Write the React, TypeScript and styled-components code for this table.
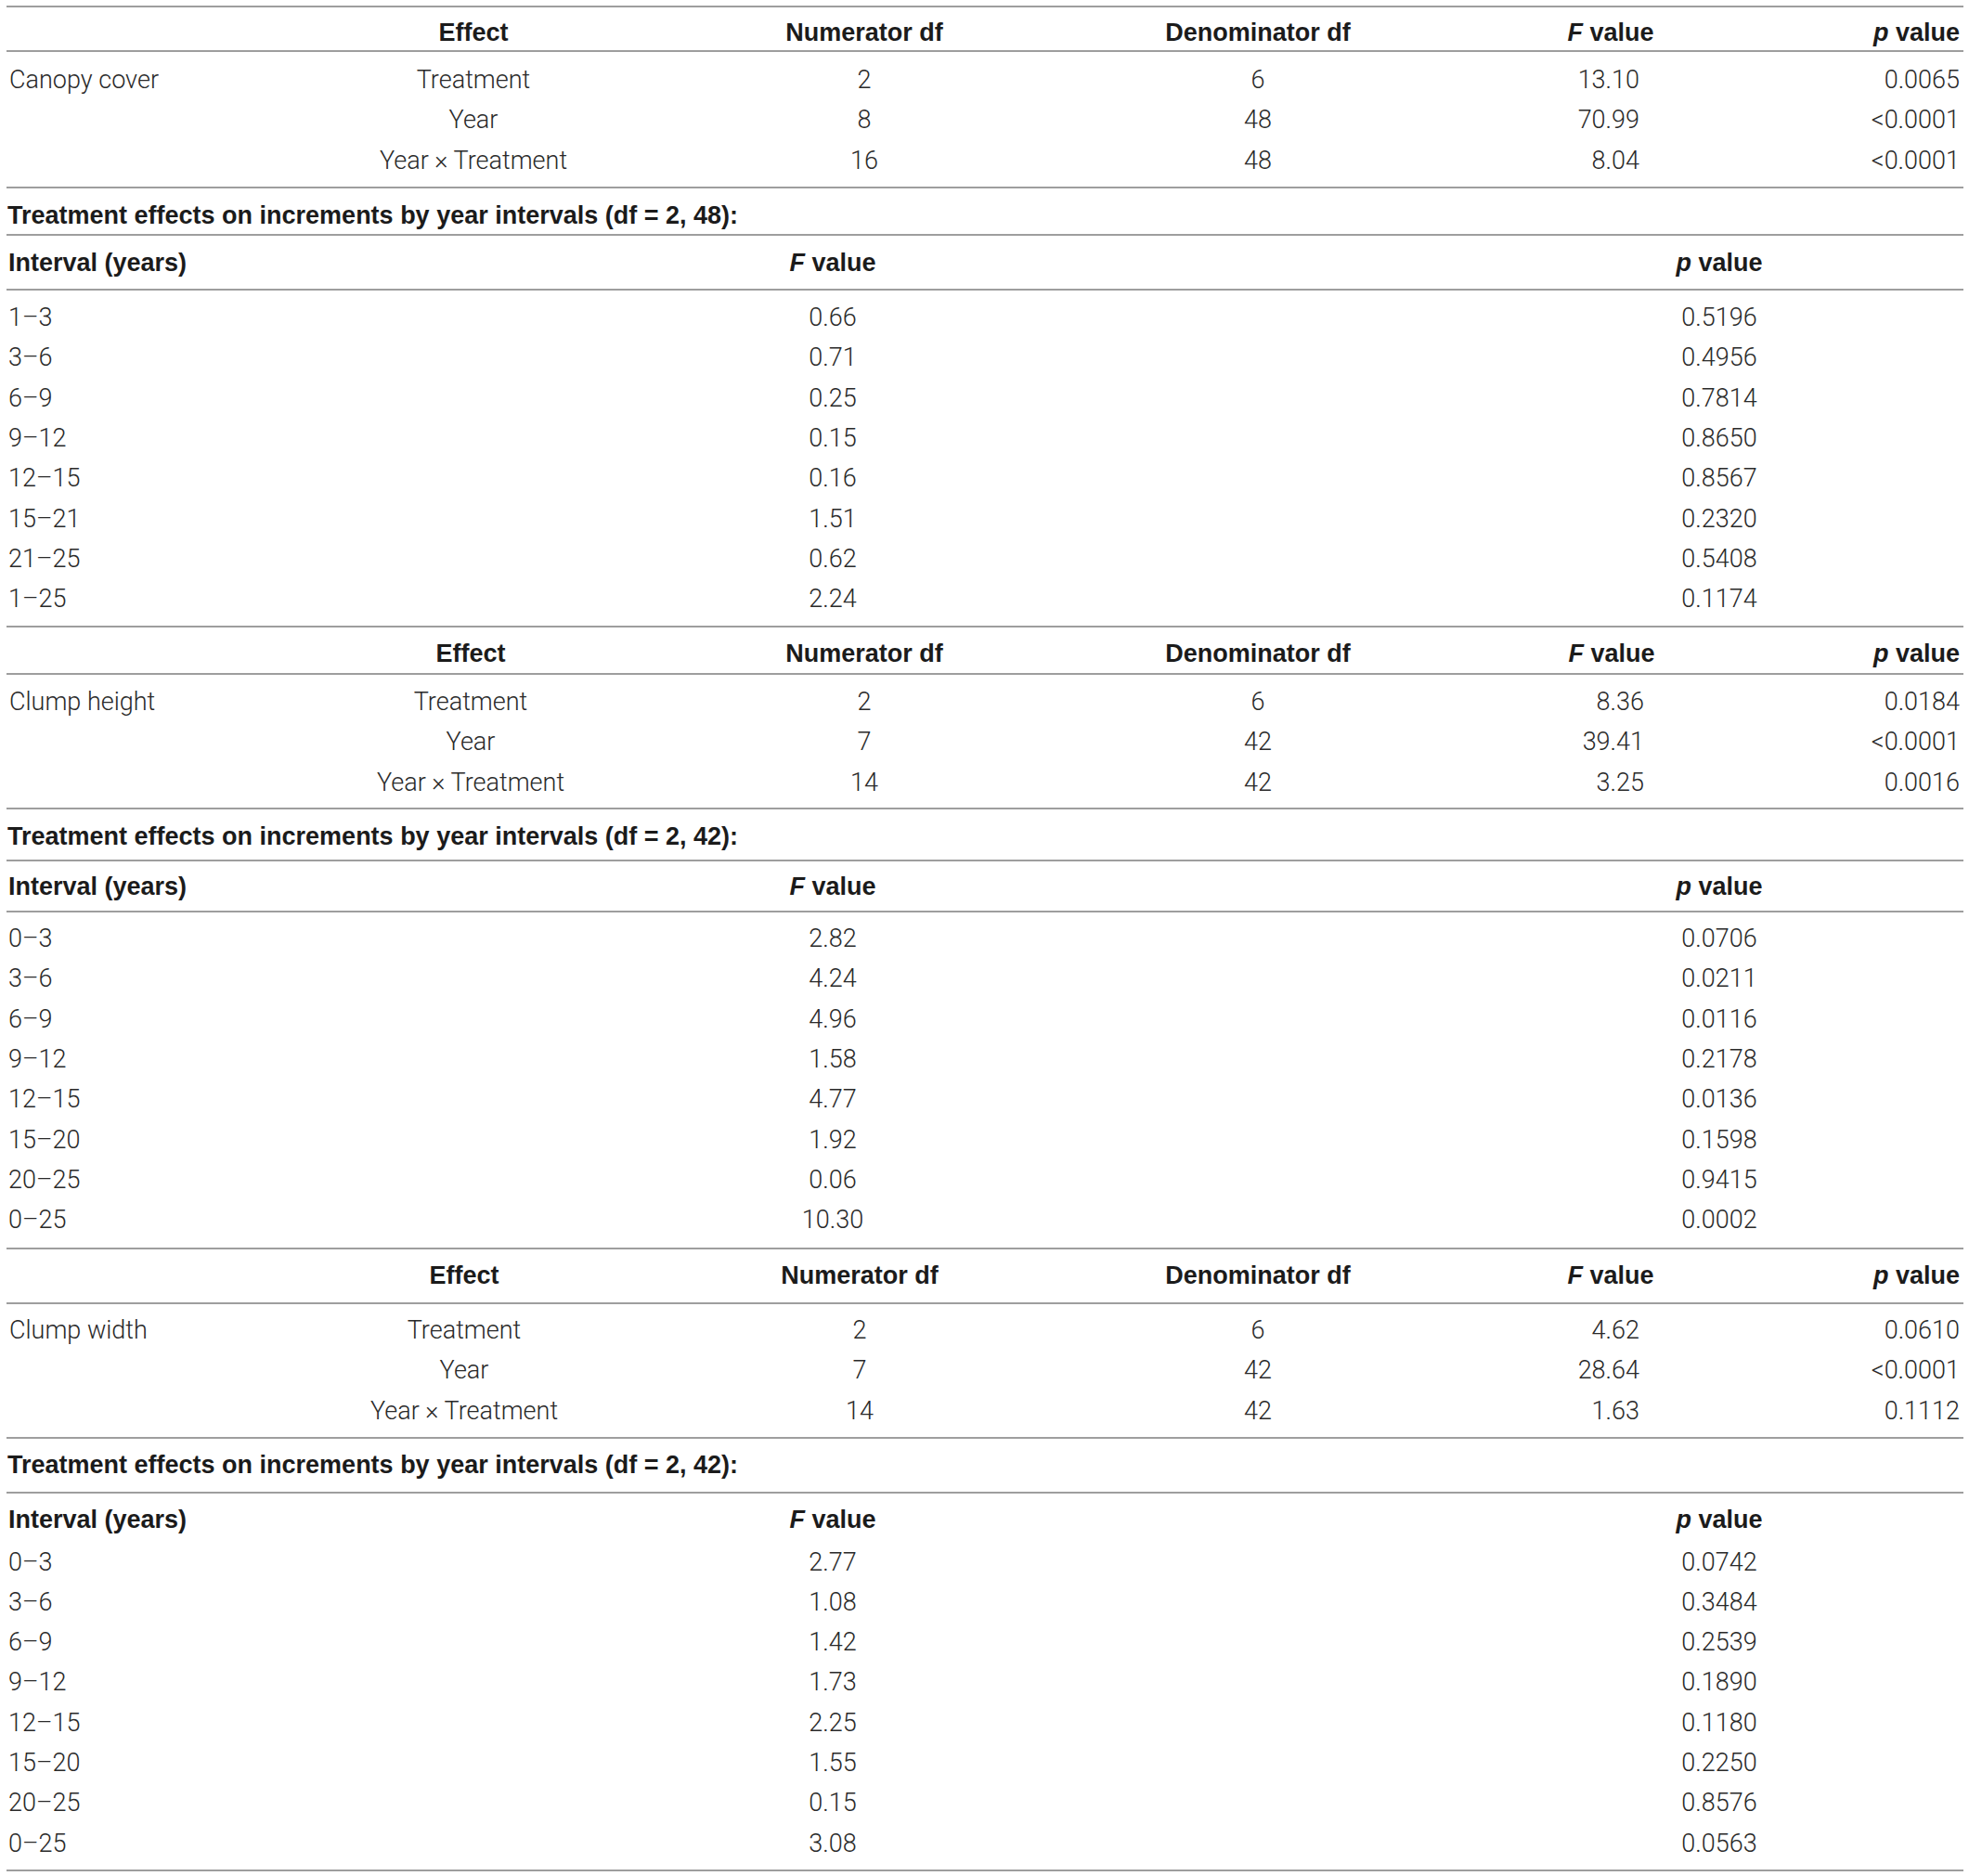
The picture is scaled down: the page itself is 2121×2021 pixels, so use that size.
import styled, { createGlobalStyle } from "styled-components";

const GlobalStyle = createGlobalStyle`
  html, body {
    margin: 0;
    padding: 0;
    background: #ffffff;
  }
  body {
    font-family: "Roboto", "Liberation Sans", Arial, sans-serif;
    color: #2a2a2a;
  }
`;

const Page = styled.div`
  width: 2108px;
  margin-left: 7px;
  padding-top: 6px;
`;

const Rule = styled.div`
  height: 2px;
  background: #9e9e9e;
`;

const Row = styled.div<{ $cols: string; $h: number; $padTop?: number }>`
  display: grid;
  grid-template-columns: ${(p) => p.$cols};
  align-items: center;
  height: ${(p) => p.$h}px;
  padding-top: ${(p) => p.$padTop ?? 0}px;
  box-sizing: border-box;
`;

const Body = styled.div<{ $top: number; $bottom: number }>`
  padding: ${(p) => p.$top}px 0 ${(p) => p.$bottom}px;
`;

const Cell = styled.div<{ $align?: "left" | "center" | "right"; $padR?: number; $padL?: number }>`
  font-size: 27px;
  font-weight: 300;
  white-space: nowrap;
  text-align: ${(p) => p.$align ?? "center"};
  padding-top: 2px;
  padding-right: ${(p) => p.$padR ?? 0}px;
  padding-left: ${(p) => p.$padL ?? 0}px;
`;

const HeadCell = styled(Cell)`
  padding-top: 0;
  font-family: "Liberation Sans", Arial, sans-serif;
  font-weight: 700;
  color: #1b1b1b;
`;

const Title = styled.div<{ $h: number; $padTop: number }>`
  display: flex;
  align-items: center;
  box-sizing: border-box;
  height: ${(p) => p.$h}px;
  padding: ${(p) => p.$padTop}px 0 0 1px;
  font-family: "Liberation Sans", Arial, sans-serif;
  font-weight: 700;
  font-size: 27px;
  color: #1b1b1b;
  white-space: nowrap;
`;

const ROW_H = 43.33;
const INTERVAL_COLS = "693px 394px 506px 504px 1fr";

type Effect = [string, string, string, string, string];
type Interval = [string, string, string];

interface Block {
  label: string;
  cols: string;
  headH: number;
  headPad: number;
  body: [number, number];
  titleH: number;
  titlePad: number;
  df: string;
  intHeadH: number;
  intHeadPad: number;
  intRule: boolean;
  intBody: [number, number];
  effects: Effect[];
  intervals: Interval[];
}

const blocks: Block[] = [
  {
    label: "Canopy cover",
    cols: "323px 360px 482px 366px 394px 1fr",
    headH: 46,
    headPad: 8,
    body: [7.35, 7.65],
    titleH: 49,
    titlePad: 10,
    df: "2, 48",
    intHeadH: 57,
    intHeadPad: 2,
    intRule: true,
    intBody: [6.35, 8],
    effects: [
      ["Treatment", "2", "6", "13.10", "0.0065"],
      ["Year", "8", "48", "70.99", "<0.0001"],
      ["Year × Treatment", "16", "48", "8.04", "<0.0001"],
    ],
    intervals: [
      ["1–3", "0.66", "0.5196"],
      ["3–6", "0.71", "0.4956"],
      ["6–9", "0.25", "0.7814"],
      ["9–12", "0.15", "0.8650"],
      ["12–15", "0.16", "0.8567"],
      ["15–21", "1.51", "0.2320"],
      ["21–25", "0.62", "0.5408"],
      ["1–25", "2.24", "0.1174"],
    ],
  },
  {
    label: "Clump height",
    cols: "320px 360px 488px 360px 402px 1fr",
    headH: 49,
    headPad: 8,
    body: [6.35, 6.65],
    titleH: 54,
    titlePad: 5,
    df: "2, 42",
    intHeadH: 53,
    intHeadPad: 3,
    intRule: true,
    intBody: [5.35, 9],
    effects: [
      ["Treatment", "2", "6", "8.36", "0.0184"],
      ["Year", "7", "42", "39.41", "<0.0001"],
      ["Year × Treatment", "14", "42", "3.25", "0.0016"],
    ],
    intervals: [
      ["0–3", "2.82", "0.0706"],
      ["3–6", "4.24", "0.0211"],
      ["6–9", "4.96", "0.0116"],
      ["9–12", "1.58", "0.2178"],
      ["12–15", "4.77", "0.0136"],
      ["15–20", "1.92", "0.1598"],
      ["20–25", "0.06", "0.9415"],
      ["0–25", "10.30", "0.0002"],
    ],
  },
  {
    label: "Clump width",
    cols: "313px 360px 492px 366px 394px 1fr",
    headH: 57,
    headPad: 0,
    body: [5.35, 7.65],
    titleH: 57,
    titlePad: 0,
    df: "2, 42",
    intHeadH: 51,
    intHeadPad: 7,
    intRule: false,
    intBody: [0, 7.3],
    effects: [
      ["Treatment", "2", "6", "4.62", "0.0610"],
      ["Year", "7", "42", "28.64", "<0.0001"],
      ["Year × Treatment", "14", "42", "1.63", "0.1112"],
    ],
    intervals: [
      ["0–3", "2.77", "0.0742"],
      ["3–6", "1.08", "0.3484"],
      ["6–9", "1.42", "0.2539"],
      ["9–12", "1.73", "0.1890"],
      ["12–15", "2.25", "0.1180"],
      ["15–20", "1.55", "0.2250"],
      ["20–25", "0.15", "0.8576"],
      ["0–25", "3.08", "0.0563"],
    ],
  },
];

function EffectTable({ block }: { block: Block }) {
  return (
    <>
      <Row $cols={block.cols} $h={block.headH} $padTop={block.headPad}>
        <HeadCell />
        <HeadCell>Effect</HeadCell>
        <HeadCell>Numerator df</HeadCell>
        <HeadCell>Denominator df</HeadCell>
        <HeadCell>
          <i>F</i> value
        </HeadCell>
        <HeadCell $align="right" $padR={4}>
          <i>p</i> value
        </HeadCell>
      </Row>
      <Rule />
      <Body $top={block.body[0]} $bottom={block.body[1]}>
        {block.effects.map((e, i) => (
          <Row key={e[0]} $cols={block.cols} $h={ROW_H}>
            <Cell $align="left" $padL={3}>
              {i === 0 ? block.label : ""}
            </Cell>
            <Cell>{e[0]}</Cell>
            <Cell>{e[1]}</Cell>
            <Cell>{e[2]}</Cell>
            <Cell $align="right" $padR={166}>
              {e[3]}
            </Cell>
            <Cell $align="right" $padR={4}>
              {e[4]}
            </Cell>
          </Row>
        ))}
      </Body>
    </>
  );
}

function IntervalTable({ block }: { block: Block }) {
  return (
    <>
      <Row $cols={INTERVAL_COLS} $h={block.intHeadH} $padTop={block.intHeadPad}>
        <HeadCell $align="left" $padL={2}>
          Interval (years)
        </HeadCell>
        <HeadCell>
          <i>F</i> value
        </HeadCell>
        <HeadCell />
        <HeadCell>
          <i>p</i> value
        </HeadCell>
      </Row>
      {block.intRule && <Rule />}
      <Body $top={block.intBody[0]} $bottom={block.intBody[1]}>
        {block.intervals.map((r) => (
          <Row key={r[0]} $cols={INTERVAL_COLS} $h={ROW_H}>
            <Cell $align="left" $padL={2}>
              {r[0]}
            </Cell>
            <Cell>{r[1]}</Cell>
            <Cell />
            <Cell>{r[2]}</Cell>
          </Row>
        ))}
      </Body>
    </>
  );
}

export default function App() {
  return (
    <>
      <GlobalStyle />
      <Page>
        <Rule />
        {blocks.map((b) => (
          <div key={b.label}>
            <EffectTable block={b} />
            <Rule />
            <Title $h={b.titleH} $padTop={b.titlePad}>
              Treatment effects on increments by year intervals (df = {b.df}):
            </Title>
            <Rule />
            <IntervalTable block={b} />
            <Rule />
          </div>
        ))}
      </Page>
    </>
  );
}
